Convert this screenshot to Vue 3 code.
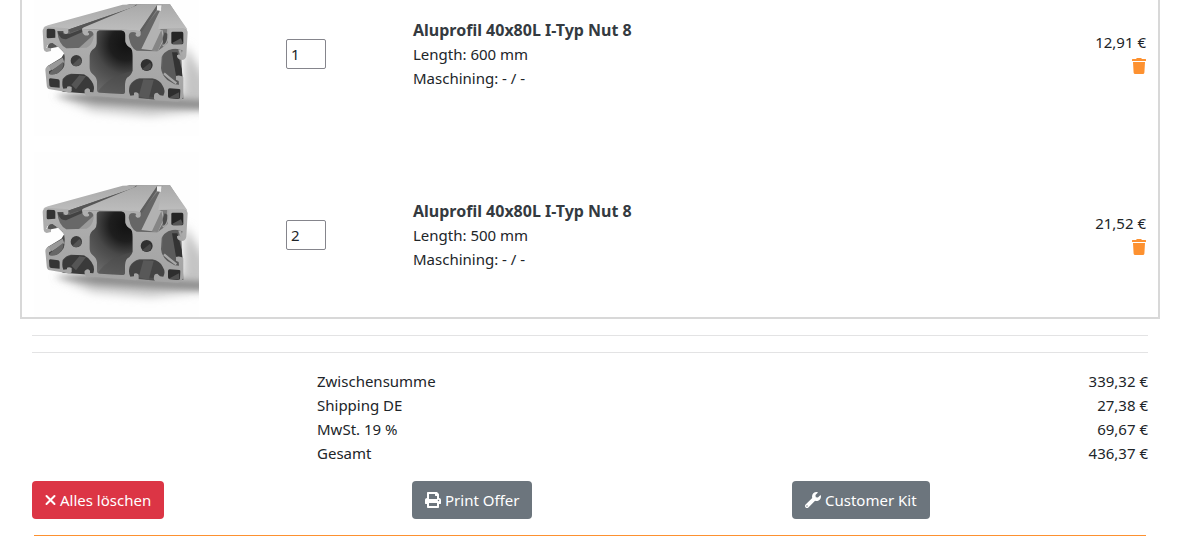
<script setup>
// Warenkorb: Positionen, Summen und Aktionen.
import { ref } from 'vue'

const items = ref([
  { id: 1, name: 'Aluprofil 40x80L I-Typ Nut 8', qty: 1, length: '600 mm', machining: '- / -', price: '12,91 €' },
  { id: 2, name: 'Aluprofil 40x80L I-Typ Nut 8', qty: 2, length: '500 mm', machining: '- / -', price: '21,52 €' },
])

const totals = [
  { label: 'Zwischensumme', value: '339,32 €' },
  { label: 'Shipping DE', value: '27,38 €' },
  { label: 'MwSt. 19 %', value: '69,67 €' },
  { label: 'Gesamt', value: '436,37 €' },
]

function remove(id) {
  items.value = items.value.filter((item) => item.id !== id)
}

function clearAll() {
  items.value = []
}

function printOffer() {
  window.print()
}
</script>

<template>
  <main class="cart">
    <section class="items">
      <article v-for="item in items" :key="item.id" class="item">
        <div class="item__image">
          <svg viewBox="54 6 495 495" role="img" :aria-label="item.name">
            <defs>
              <linearGradient id="groove" x1="0" y1="1" x2="1" y2="0">
                <stop offset="0" stop-color="#3c3c3c" />
                <stop offset="0.5" stop-color="#555" />
                <stop offset="1" stop-color="#999" />
              </linearGradient>
              <radialGradient id="chamber" gradientUnits="userSpaceOnUse" cx="330" cy="225" r="165">
                <stop offset="0" stop-color="#121212" />
                <stop offset="0.3" stop-color="#1e1e1e" />
                <stop offset="0.55" stop-color="#484848" />
                <stop offset="1" stop-color="#6c6c6c" />
              </radialGradient>
              <linearGradient id="top" x1="0" y1="1" x2="0" y2="0">
                <stop offset="0" stop-color="#bdbdbd" />
                <stop offset="1" stop-color="#a9a9a9" />
              </linearGradient>
              <linearGradient id="front" x1="0" y1="0" x2="0" y2="1">
                <stop offset="0" stop-color="#b0b0b0" />
                <stop offset="1" stop-color="#a2a2a2" />
              </linearGradient>
              <filter id="soft" x="-20%" y="-40%" width="140%" height="180%">
                <feGaussianBlur stdDeviation="15" />
              </filter>
              <filter id="contact" x="-20%" y="-80%" width="140%" height="260%">
                <feGaussianBlur stdDeviation="9" />
              </filter>
            </defs>
            <rect x="54" y="6" width="495" height="495" fill="#fefefe" />
            <path d="M120 380L500 380L506 225L570 330L580 422L400 440L230 425Z" fill="#c4c4c4" filter="url(#soft)" />
            <path d="M112 380L245 372L410 385L570 395L570 420L410 413L240 403Z" fill="#8c8c8c" filter="url(#contact)" />

            <!-- Nuten und Rückseite -->
            <path d="M90 178L340 106H462L512 182L506 240L496 262L502 390L420 392L250 376L140 364L102 350L94 292L136 266L145 252L128 234L90 222Z" fill="url(#groove)" />
            <path d="M94 292L140 266L145 280L108 304Z" fill="#999" />
            <path d="M125 192L150 187L208 180L236 190L228 222L214 238H150Q128 230 125 192Z" fill="#686868" />
            <path d="M188 238L236 194L232 220L216 240Z" fill="#9a9a9a" />
            <path d="M125 190L142 190V196L162 194L199 180L201 188L150 211Q132 212 125 190Z" fill="#424242" />
            <path d="M330 190L370 195L430 118L436 178L438 220L428 246H360Q333 228 330 190Z" fill="#666" />
            <path d="M376 240L430 128L438 120L430 180L440 184L444 212L426 246Z" fill="#b2b2b2" />
            <path d="M408 243L436 183L442 209L425 247Z" fill="#858585" />
            <path d="M440 258Q460 235 486 240L500 330L482 350Q444 332 440 305Z" fill="#5b5b5b" />
            <path d="M468 250L484 250L497 300L499 322L480 320Z" fill="#333" />
            <path d="M132 348Q146 312 190 314Q226 319 234 352V375L140 368Z" fill="#3a3a3a" />
            <path d="M166 347L190 319L210 322L180 361Z" fill="#555" />
            <path d="M338 378Q340 334 372 330L420 331Q444 338 454 366L447 386Z" fill="#444" />
            <path d="M368 382L382 331L413 333L398 390Z" fill="#585858" />

            <!-- Oberseiten -->
            <path d="M82 177Q84 172 96 169L320 107L362 106L351 115L160 181L140 180L92 176Z" fill="url(#top)" />
            <path d="M160 181L351 115L362 106L358 115L162 192Z" fill="#565656" />
            <path d="M198 182Q197 178 204 175L366 107L425 106L372 186L240 181Z" fill="url(#top)" />
            <path d="M372 184L425 106L421 124L374 194Z" fill="#5e5e5e" />
            <path d="M427 180L438 110Q440 106 446 106H462L514 181L502 179Z" fill="url(#top)" />
            <path d="M423 109L437 109L435 126L423 124Z" fill="#eee" />

            <!-- Mittelkammer -->
            <path d="M250 184H316Q327 185 328 197V217Q330 230 345 238Q350 244 350 260V305Q345 320 333 326Q327 333 327 352V369Q327 376 316 375L252 371Q243 370 243 362V337Q242 324 229 314Q221 308 221 294V260Q222 247 235 238Q243 230 242 215V192Q243 184 250 184Z" fill="url(#chamber)" />
            <path d="M246 367Q280 320 350 305Q345 320 333 326Q327 333 327 352V375L252 371Z" fill="#4e4e4e" opacity="0.5" />

            <!-- Stirnfläche -->
            <path fill="url(#front)" fill-rule="evenodd" d="M92 173L157 178V187Q157 195 150 195Q142 194 142 186H124Q127 226 151 238L212 236Q229 228 233 204Q234 191 226 187Q218 183 215 190Q221 192 219 197Q213 202 205 198Q198 193 198 181L240 181H322L374 187V197Q373 204 364 203Q355 200 361 192Q355 188 345 190Q336 195 339 207Q345 239 362 245L424 247Q441 236 455 222L457 180L427 178L502 179Q515 180 515 190L511 260Q508 274 496 273Q482 270 483 259Q490 253 495 260L500 244Q480 235 458 243Q442 251 437 264L435 298Q437 318 454 333L476 346L489 347L488 336L480 332V321Q492 316 502 325V382Q499 397 485 398L418 394Q412 390 414 380Q414 371 424 371L432 379L442 380Q450 365 440 350Q432 333 409 328L370 328Q350 333 341 350Q336 366 343 380L354 379V371Q361 368 368 374V388L359 391L245 381L211 380Q204 375 206 363Q214 353 222 362V369L232 370Q238 352 226 335Q218 323 204 316L165 314Q149 317 140 330Q137 350 142 359L153 358V353Q160 350 167 354V367Q163 372 151 369L102 361Q92 359 92 347L88 303Q89 292 98 291L106 303L99 307L99 315Q119 321 136 304Q147 294 145 280Q149 257 140 246L126 233Q108 219 94 229L91 237L105 236V246L92 249Q84 247 83 240L80 186Q80 175 92 173ZM250 184Q243 184 242 192V215Q243 230 235 238Q222 247 221 260V294Q221 308 229 314Q242 324 243 337V362Q243 370 252 371L316 375Q327 376 327 369V352Q327 333 333 326Q345 320 350 305V260Q350 244 345 238Q330 230 328 217V197Q327 185 316 184Z" />
            <g fill="none" stroke="#a8a8a8" stroke-width="7">
              <path d="M457 180Q458 215 441 231" />
              <path d="M491 242L499 266L494 269" />
              <path d="M481 343Q458 326 444 313" />
            </g>
            <path d="M446 190Q436 211 443 228Q455 219 454 194Z" fill="#4d4d4d" />
            <path d="M92 183Q92 179 97 179L114 180Q118 181 118 186V206L96 208Q92 208 92 203Z" fill="#333" />
            <path d="M94 236Q96 221 110 222L124 234L105 238Z" fill="#555" />
            <path d="M99 315L104 308L142 278Q144 304 121 315Z" fill="#676767" />
            <path d="M99 332Q98 329 103 328L127 331Q131 332 131 337V356L106 354Q101 354 100 349Z" fill="#343434" />
            <path d="M466 192Q466 188 470 188H498Q502 188 502 194V222Q502 226 497 226H472Q466 226 466 221Z" fill="#252525" />
            <path d="M468 222L495 208L501 223Q498 226 472 226Z" fill="#555" />
            <path d="M456 363Q456 358 461 358L490 360Q494 360 493 366L492 386Q491 390 484 390L461 388Q456 387 456 382Z" fill="#2e2e2e" />
            <path d="M458 386L489 370L490 389Z" fill="#505050" />
            <circle cx="181" cy="275" r="17" fill="#3b3b3b" />
            <path d="M169 287L190 267Q202 277 193 286Q181 297 169 287Z" fill="#555" />
            <circle cx="392" cy="288" r="18" fill="#303030" />
            <path d="M379 300L402 281Q410 290 402 300Q391 309 379 300Z" fill="#484848" />
          </svg>
        </div>

        <div class="item__qty">
          <input v-model="item.qty" type="text" inputmode="numeric" aria-label="Menge" />
        </div>

        <div class="item__info">
          <strong>{{ item.name }}</strong>
          <span>Length: {{ item.length }}</span>
          <span>Maschining: {{ item.machining }}</span>
        </div>

        <div class="item__price">
          <span>{{ item.price }}</span>
          <button class="trash" type="button" aria-label="Entfernen" @click="remove(item.id)">
            <svg viewBox="0 0 14 16" aria-hidden="true">
              <path d="M1 4H13L12.4 14.5Q12.3 16 10.8 16H3.200Q1.700 16 1.600 14.500ZM.5 1H4L4.600.3Q4.900 0 5.300 0H8.700Q9.100 0 9.400.3L10 1H13.500Q14 1 14 1.500V2.500Q14 3 13.500 3H.5Q0 3 0 2.500V1.500Q0 1 .5 1Z" />
            </svg>
          </button>
        </div>
      </article>
    </section>

    <section class="summary">
      <hr />
      <hr />
      <dl class="totals">
        <div v-for="row in totals" :key="row.label" class="totals__row">
          <dt>{{ row.label }}</dt>
          <dd>{{ row.value }}</dd>
        </div>
      </dl>

      <div class="actions">
        <div>
          <button class="btn btn--danger" type="button" @click="clearAll">
            <svg class="icon icon--times" viewBox="0 0 11 16" aria-hidden="true">
              <path d="M1.500 4L9.500 12M9.500 4L1.500 12" />
            </svg>
            Alles löschen
          </button>
        </div>
        <div>
          <button class="btn" type="button" @click="printOffer">
            <svg class="icon" viewBox="0 0 512 512" aria-hidden="true">
              <path d="M448 192V77.250c0-8.490-3.370-16.620-9.370-22.630L393.370 9.370c-6-6-14.140-9.370-22.630-9.370H96C78.330 0 64 14.330 64 32v160c-35.350 0-64 28.650-64 64v112c0 8.840 7.160 16 16 16h48v96c0 17.670 14.330 32 32 32h320c17.670 0 32-14.330 32-32v-96h48c8.840 0 16-7.160 16-16V256c0-35.350-28.650-64-64-64zm-64 256H128v-96h256v96zm0-224H128V64h192v48c0 8.840 7.160 16 16 16h48v96zm48 72c-13.250 0-24-10.750-24-24 0-13.260 10.750-24 24-24s24 10.740 24 24c0 13.250-10.750 24-24 24z" />
            </svg>
            Print Offer
          </button>
        </div>
        <div>
          <button class="btn" type="button">
            <svg class="icon" viewBox="0 0 512 512" aria-hidden="true">
              <path d="M507.730 109.100c-2.240-9.030-13.540-12.090-20.120-5.510l-74.360 74.360-67.880-11.310-11.310-67.880 74.360-74.360c6.620-6.620 3.430-17.900-5.660-20.160-47.380-11.740-99.550.91-136.580 37.930-39.640 39.640-50.550 97.100-34.050 147.200L18.740 402.760c-24.990 24.990-24.990 65.510 0 90.500 24.990 24.990 65.510 24.990 90.500 0l213.210-213.210c50.120 16.710 107.470 5.680 147.370-34.220 37.070-37.070 49.700-89.320 37.910-136.730zM64 472c-13.250 0-24-10.750-24-24 0-13.260 10.750-24 24-24s24 10.740 24 24c0 13.250-10.750 24-24 24z" />
            </svg>
            Customer Kit
          </button>
        </div>
      </div>
    </section>
    <hr class="divider" />
  </main>
</template>

<style>
body {
  margin: 0;
  background: #fff;
}
</style>

<style scoped>
.cart {
  padding: 0 19px 0 20px;
  overflow: hidden;
  color: #212529;
  font-family: 'Segoe UI', 'Noto Sans', sans-serif;
  font-size: 15px;
  line-height: 24px;
}

.items {
  display: flex;
  flex-direction: column;
  gap: 16px;
  margin-top: -31px;
  border: 2px solid #d8d8d8;
}

.item {
  display: grid;
  grid-template-columns: 252fr 127fr 380fr 353fr;
  align-items: center;
  padding: 0 12px;
}

.item__image svg {
  display: block;
  width: 165px;
  height: 165px;
}

.item__qty input {
  box-sizing: border-box;
  width: 40px;
  height: 30px;
  padding: 0 4px;
  border: 1px solid #85858c;
  border-radius: 2px;
  background: #fff;
  color: inherit;
  font: inherit;
}

.item__info {
  display: flex;
  flex-direction: column;
}

.item__info strong {
  color: #343a40;
  font-size: 16px;
}

.item__price {
  display: flex;
  flex-direction: column;
  align-items: flex-end;
}

.trash {
  display: flex;
  align-items: center;
  height: 24px;
  padding: 0;
  border: 0;
  background: none;
  cursor: pointer;
}

.trash svg {
  width: 14px;
  height: 16px;
  fill: #fd9130;
}

.summary {
  padding: 0 12px;
}

hr {
  height: 1px;
  margin: 16px 0;
  border: 0;
  background: #e3e3e4;
}

.totals {
  margin: 0 0 16px;
  padding-left: 285px;
}

.totals__row {
  display: flex;
  justify-content: space-between;
}

.totals__row dd {
  margin: 0;
}

.actions {
  display: grid;
  grid-template-columns: 380fr 380fr 356fr;
}

.btn {
  display: inline-flex;
  align-items: center;
  gap: 4px;
  height: 38px;
  padding: 0 13px;
  border: 0;
  border-radius: 4px;
  background: #6c757d;
  color: #fff;
  font: inherit;
  cursor: pointer;
}

.btn--danger {
  background: #dc3545;
}

.icon {
  width: 16px;
  height: 16px;
  fill: currentColor;
}

.icon--times {
  width: 11px;
  fill: none;
  stroke: currentColor;
  stroke-width: 2;
  stroke-linecap: round;
}

.divider {
  margin: 16px 14px 0;
  background: #fd9130;
}
</style>
